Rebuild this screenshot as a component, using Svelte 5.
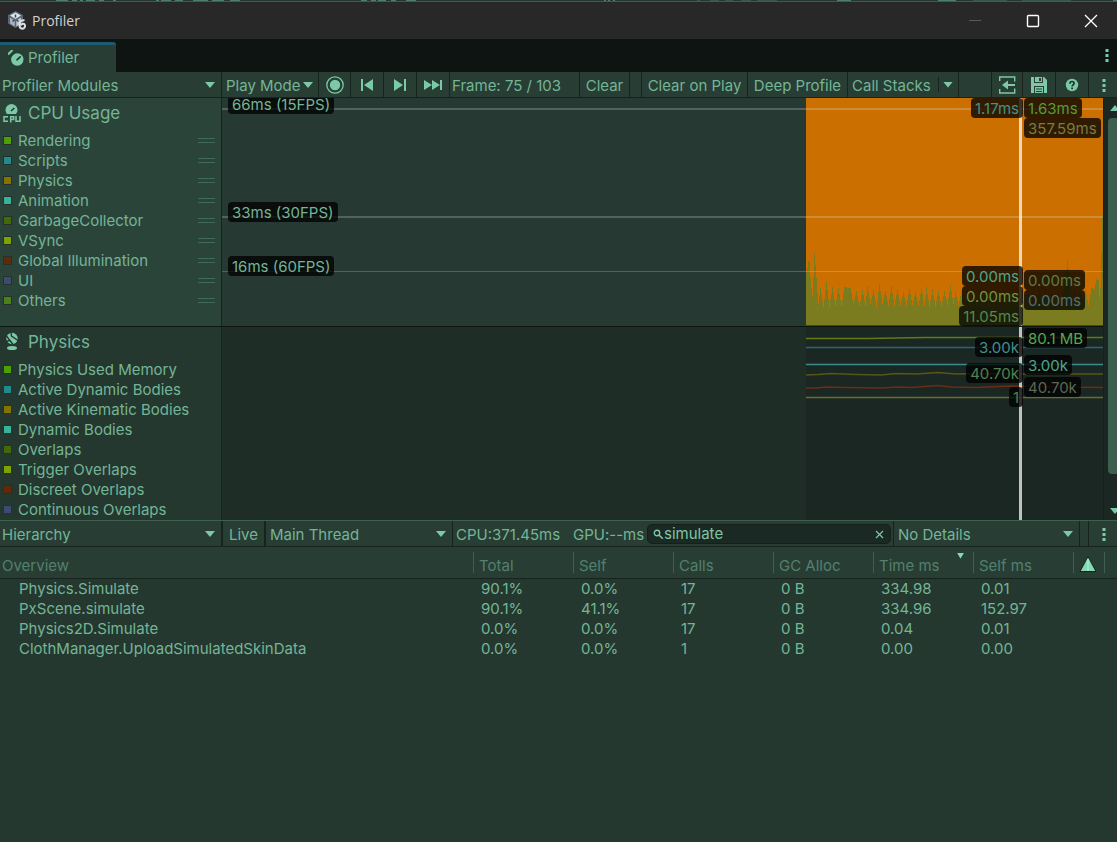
<script>
  const cpuItems = [
    ['Rendering', '#4d9f08'],
    ['Scripts', '#218a8c'],
    ['Physics', '#857300'],
    ['Animation', '#37b39c'],
    ['GarbageCollector', '#43690b'],
    ['VSync', '#7da204'],
    ['Global Illumination', '#5f2a07'],
    ['UI', '#3d4b70'],
    ['Others', '#4b8019'],
  ];
  const physicsItems = [
    ['Physics Used Memory', '#4d9f08'],
    ['Active Dynamic Bodies', '#218a8c'],
    ['Active Kinematic Bodies', '#857300'],
    ['Dynamic Bodies', '#37b39c'],
    ['Overlaps', '#43690b'],
    ['Trigger Overlaps', '#7da204'],
    ['Discreet Overlaps', '#5f2a07'],
    ['Continuous Overlaps', '#3d4b70'],
  ];
  const columns = ['Total', 'Self', 'Calls', 'GC Alloc', 'Time ms', 'Self ms'];
  const rows = [
    ['Physics.Simulate', '90.1%', '0.0%', '17', '0 B', '334.98', '0.01'],
    ['PxScene.simulate', '90.1%', '41.1%', '17', '0 B', '334.96', '152.97'],
    ['Physics2D.Simulate', '0.0%', '0.0%', '17', '0 B', '0.04', '0.01'],
    ['ClothManager.UploadSimulatedSkinData', '0.0%', '0.0%', '1', '0 B', '0.00', '0.00'],
  ];

  // Top edge of the "Others" band: [frame column, y], interpolated into one bar per column.
  const knots = [
    [0, 173], [1, 170], [2, 163], [3, 163], [4, 180], [5, 190], [6, 198], [7, 180], [8, 155], [9, 167], [10, 180], [11, 195],
    [12, 206], [14, 190], [17, 209], [20, 184], [23, 209], [26, 189], [29, 208], [32, 190], [35, 208], [38, 189], [44, 190],
    [47, 206], [50, 193], [53, 208], [56, 192], [59, 208], [61, 188], [64, 206], [67, 192], [70, 209], [73, 186], [76, 206],
    [79, 193], [82, 208], [85, 188], [88, 208], [91, 191], [94, 208], [97, 194], [100, 208], [103, 191], [106, 207],
    [109, 194], [112, 208], [115, 190], [118, 208], [120, 189], [123, 209], [126, 191], [129, 208], [132, 193], [135, 208],
    [138, 193], [141, 207], [144, 187], [147, 206], [149, 194], [152, 208], [155, 193], [158, 208], [161, 192], [164, 208],
    [167, 192], [170, 208], [173, 192], [176, 208], [179, 192], [182, 208], [185, 192], [188, 208], [191, 192], [194, 208],
    [197, 192], [200, 208], [203, 192], [206, 208], [209, 192], [212, 208], [215, 192], [218, 208], [221, 192], [224, 208],
    [227, 192], [230, 208], [233, 192], [236, 208], [239, 190], [242, 208], [245, 192], [248, 208], [251, 192], [254, 208],
    [257, 192], [259, 180], [261, 162], [263, 180], [265, 205], [268, 192], [271, 208], [274, 192], [277, 204], [279, 192],
    [282, 207], [285, 190], [288, 191], [290, 181], [292, 182], [293, 199], [294, 190], [295, 155], [296, 118], [297, 118],
  ];
  let band = 'M0 228';
  let k = 0;
  for (let x = 0; x < 297; x++) {
    while (k < knots.length - 2 && knots[k + 1][0] <= x) k++;
    const [x0, y0] = knots[k];
    const [x1, y1] = knots[k + 1];
    const y = Math.round(y0 + ((y1 - y0) * (x - x0)) / (x1 - x0));
    band += `V${y}H${x + 1}`;
  }
  band += 'V228Z';

  let query = $state('simulate');
</script>

{#snippet dots()}
  <svg class="icon" width="4" height="14" viewBox="0 0 4 14"><path d="M.5 1h3v3h-3zM.5 6h3v3h-3zM.5 11h3v3h-3z" fill="currentColor" /></svg>
{/snippet}

<div class="window">
  <svg class="behind" height="3" width="100%" aria-hidden="true">
    <path d="M56 .5h12M72 .5h5M80 .5h3M86 .5h9M99 .5h5M113 .5h3M156 .5h3M161 .5h10M175 .5h8M193 .5h15M212 .5h12M230 .5h10M361 .5h6M371 .5h5M378 .5h8M391 .5h5M406 .5h10M604 .5h2M608 .5h2M613 .5h2M837 .5h14M938 .5h18M1113 .5h4" stroke="#4a7f6a" />
    <path d="M697 .5h3M710 .5h9M725 .5h8M741 .5h10M757 .5h20M973 .5h34M1022 .5h49" stroke="#35574a" />
    <path d="M0 1.500H1117" stroke="#45594f" />
    <path d="M0 2.500H1117" stroke="#282828" />
  </svg>
  <header class="titlebar">
    <svg width="20" height="20" viewBox="0 0 20 20">
      <path d="M8.500 0 16 4v8.500L8.500 17 1 12.500V4z" fill="#596775" />
      <path d="M8.500 1.500 14 4.500 8.500 8 3 4.500z" fill="#e1e7eb" />
      <path d="M3 6.500 7.700 9.400v6L3 12.500z" fill="#aab4c0" />
      <path d="M9.300 9.400 14 6.500v6l-4.700 3z" fill="#c2cad1" />
      <path d="M8.500 3.500v3M5.500 10.500l2-1.500M11.500 10.500l-2-1.500" stroke="#354350" stroke-width="1.500" />
      <path d="M17.500 9.500c-3-1-5 1-5 4.500 0 5 5.500 4.500 5.500 1 0-3-3.500-3-4-.5" fill="none" stroke="#dce1e5" stroke-width="2" />
    </svg>
    <h1>Profiler</h1>
    <div class="wincontrols">
      <button aria-label="Minimize" disabled><svg width="14" height="14" viewBox="0 0 14 14"><path d="M1 6.500h12" stroke="#595959" /></svg></button>
      <button aria-label="Maximize"><svg width="14" height="14" viewBox="0 0 14 14"><rect x="1.500" y="1.500" width="11" height="11" rx="1" fill="none" stroke="#fff" stroke-width="1.400" /></svg></button>
      <button aria-label="Close"><svg width="14" height="14" viewBox="0 0 14 14"><path d="M1 1l12 12M13 1 1 13" stroke="#fff" stroke-width="1.300" /></svg></button>
    </div>
  </header>

  <nav class="tabs">
    <button class="tab">
      <svg width="16" height="16" viewBox="0 0 16 16">
        <circle cx="9.300" cy="9.500" r="6.200" fill="currentColor" />
        <path d="M9 9.800 12.200 6.800" stroke="#1d2f28" stroke-width="1.600" stroke-linecap="round" />
        <path d="M0 4.500 4.500 0" stroke="currentColor" stroke-width="2" />
        <path d="M1.500 7.500 7 2" stroke="#283d34" stroke-width="1.600" />
      </svg>
      <span>Profiler</span>
    </button>
    <button class="more" aria-label="Window options">{@render dots()}</button>
  </nav>

  <div class="toolbar">
    <div class="select side">
      <select aria-label="Profiler modules"><option>Profiler Modules</option></select>
    </div>
    <div class="select play">
      <select aria-label="Target"><option>Play Mode</option></select>
    </div>
    <button class="sq" aria-label="Record">
      <svg width="18" height="18" viewBox="0 0 18 18"><circle cx="9" cy="9" r="8.200" fill="none" stroke="currentColor" stroke-width="1.300" /><circle cx="9" cy="9" r="5.200" fill="currentColor" /></svg>
    </button>
    <button class="sq" aria-label="Previous frame">
      <svg width="14" height="14" viewBox="0 0 14 14"><path d="M1 1h2v12H1zM13 1v12L4 7z" fill="currentColor" /></svg>
    </button>
    <button class="sq" aria-label="Next frame">
      <svg width="14" height="14" viewBox="0 0 14 14"><path d="M11 1h2v12h-2zM1 1v12l9-6z" fill="currentColor" /></svg>
    </button>
    <button class="sq" aria-label="Current frame">
      <svg width="18" height="14" viewBox="0 0 18 14"><path d="M0 2v10l8-5zM8 2v10l8-5zM16 2h2v10h-2z" fill="currentColor" /></svg>
    </button>
    <span class="frame">Frame: 75 / 103</span>
    <button class="text clear">Clear</button>
    <span class="spacer"></span>
    <button class="text onplay">Clear on Play</button>
    <button class="text deep">Deep Profile</button>
    <button class="text stacks">Call Stacks</button>
    <button class="drop" aria-label="Call stack options"><i class="caret"></i></button>
    <span class="fill"></span>
    <button class="sq" aria-label="Load profile">
      <svg width="18" height="18" viewBox="0 0 18 18"><path d="M1.700 5V1h15v4.500M16.700 12.500V17h-15v-4" fill="none" stroke="currentColor" stroke-width="1.400" /><path d="M7 9h10" stroke="currentColor" stroke-width="2" /><path d="M4 9l6-4.500v9z" fill="currentColor" /></svg>
    </button>
    <button class="sq" aria-label="Save profile">
      <svg width="16" height="16" viewBox="0 0 16 16"><path d="M0 0h3v6h9V0h1l3 3v13h-3V9H3v7H0z" fill="currentColor" /><path d="M4 0h7v5H4zM4 10h8v6H4z" fill="currentColor" /><path d="M8 1h2v3H8zM5 11.500h6v1H5zM5 14h6v1H5z" fill="#283d34" /></svg>
    </button>
    <button class="sq" aria-label="Help">
      <svg width="14" height="14" viewBox="0 0 14 14"><circle cx="7" cy="7" r="6.200" fill="currentColor" /><path d="M4.900 5.700C4.900 2.700 9.200 2.900 9.100 5.400 9 6.800 7.100 6.900 7.100 8.500M7.100 9.600v1.600" fill="none" stroke="#20332b" stroke-width="1.700" /></svg>
    </button>
    <button class="menu" aria-label="Profiler options">{@render dots()}</button>
  </div>

  <main class="modules">
    <div class="list">
      <section class="module selected">
        <div class="row">
          <div class="side">
            <h2>
              <svg width="20" height="20" viewBox="0 0 20 20">
                <path d="M5.500 11a6 6 0 1 1 9 0z" transform="translate(-.5 0)" fill="currentColor" />
                <path d="M9 8 12.300 5" stroke="#213a30" stroke-width="1.600" />
                <path d="M6 13.700H2v4.600h4M8.700 19.500v-5.800h3v2.900h-3M14 13v5.300h4V13" fill="none" stroke="currentColor" stroke-width="1.500" />
              </svg>
              CPU Usage
            </h2>
            <ul>
              {#each cpuItems as [name, color]}
                <li><i class="swatch" style="background:{color}"></i><span>{name}</span><i class="grip"></i></li>
              {/each}
            </ul>
          </div>
          <div class="plot">
            <svg class="data" viewBox="0 0 297 228" preserveAspectRatio="none" shape-rendering="crispEdges">
              <rect width="297" height="228" fill="#cb7000" />
              <path d={band} fill="#7b7c20" />
              <path d="M0 227.500H297" stroke="#3d4a22" />
            </svg>
            <i class="grid thick" style="top:10px"></i>
            <i class="grid thick" style="top:118px"></i>
            <i class="grid" style="top:173px"></i>
            <i class="cursor"></i>
            <span class="tag scale" style="top:-4px">66ms (15FPS)</span>
            <span class="tag scale" style="top:104px">33ms (30FPS)</span>
            <span class="tag scale" style="top:158px">16ms (60FPS)</span>
            <span class="tag l" style="top:0px;color:#449384">1.17ms</span>
            <span class="tag r" style="top:0px;color:#569a3a">1.63ms</span>
            <span class="tag r" style="top:20px;color:#787d43">357.59ms</span>
            <span class="tag l" style="top:168px;color:#51a58c">0.00ms</span>
            <span class="tag l" style="top:188px;color:#6f9545">0.00ms</span>
            <span class="tag l" style="top:208px;color:#548a4d">11.05ms</span>
            <span class="tag r" style="top:172px;color:#5a7c49">0.00ms</span>
            <span class="tag r" style="top:192px;color:#566f70">0.00ms</span>
          </div>
        </div>
      </section>
      <section class="module">
        <div class="row">
          <div class="side">
            <h2>
              <svg width="20" height="20" viewBox="0 0 20 20">
                <circle cx="10" cy="6.500" r="5.700" fill="currentColor" />
                <path d="M4 3.500 8 8.500 11 12.500M9 0l.5 4L16 8.500M4 9.500l3.500-1" fill="none" stroke="#24382f" stroke-width="1.400" />
                <ellipse cx="10" cy="16" rx="5" ry="2" fill="currentColor" />
              </svg>
              Physics
            </h2>
            <ul>
              {#each physicsItems as [name, color]}
                <li><i class="swatch" style="background:{color}"></i><span>{name}</span></li>
              {/each}
            </ul>
          </div>
          <div class="plot">
            <svg class="data" viewBox="0 0 297 193" preserveAspectRatio="none">
              <rect width="297" height="193" fill="#1b2723" />
              <g fill="none" stroke-width="1.500">
                <path d="M0 11.500H60L120 10.500H220L297 10.500" stroke="#5f7b12" />
                <path d="M0 20.500H297" stroke="#2c6475" />
                <path d="M0 37.500H297" stroke="#3d8a8c" />
                <path d="M0 48 12 47.500 25 46.500 50 47.500 75 48 90 46.500 110 47 132 45.500 150 47 175 46.500 215 47 240 46.500 265 47H297" stroke="#56561a" />
                <path d="M0 61H10L20 60 40 60.500 75 61 92 60 105 60.500 132 58.500 145 60 170 60.500 205 59 250 60 297 60.500" stroke="#6b2c18" />
                <path d="M0 70.500H297" stroke="#66702a" />
              </g>
            </svg>
            <i class="cursor"></i>
            <span class="tag r" style="top:1px;color:#5ba552">80.1 MB</span>
            <span class="tag l" style="top:10px;color:#448f89">3.00k</span>
            <span class="tag r" style="top:28px;color:#51a48c">3.00k</span>
            <span class="tag l" style="top:36px;color:#4f8250">40.70k</span>
            <span class="tag r" style="top:50px;color:#576954">40.70k</span>
            <span class="tag l" style="top:60px;color:#4f8250">1</span>
          </div>
        </div>
      </section>
    </div>
    <div class="scroll">
      <i class="caret up"></i>
      <i class="thumb"></i>
      <i class="caret"></i>
    </div>
  </main>

  <div class="toolbar lower">
    <div class="select side">
      <select aria-label="View"><option>Hierarchy</option></select>
    </div>
    <button class="text live">Live</button>
    <div class="select thread">
      <select aria-label="Thread"><option>Main Thread</option></select>
    </div>
    <span class="stat">CPU:371.45ms</span>
    <span class="stat gpu">GPU:--ms</span>
    <label class="search">
      <svg width="11" height="11" viewBox="0 0 11 11"><circle cx="4" cy="4" r="2.700" fill="none" stroke="currentColor" stroke-width="1.400" /><path d="M6 6l3.800 3.800" stroke="currentColor" stroke-width="1.600" /></svg>
      <input type="text" aria-label="Search samples" bind:value={query} />
      <button aria-label="Clear search" onclick={() => (query = '')}><svg width="9" height="9" viewBox="0 0 9 9"><path d="M1 1l7 7M8 1 1 8" stroke="currentColor" stroke-width="1.200" /></svg></button>
    </label>
    <div class="select details">
      <select aria-label="Details"><option>No Details</option></select>
    </div>
    <span class="notch"></span>
    <button class="menu" aria-label="Hierarchy options">{@render dots()}</button>
  </div>

  <table>
    <colgroup>
      <col />
      {#each columns as _}<col class="num" />{/each}
      <col class="warn" />
      <col class="rest" />
    </colgroup>
    <thead>
      <tr>
        <th class="first">Overview</th>
        {#each columns as c}
          <th><span class="head">{c}{#if c === 'Time ms'}<i class="sort"></i>{/if}</span></th>
        {/each}
        <th><span class="head mark">
          <svg width="18" height="18" viewBox="0 0 18 18"><path d="M9 1.500 17 16.500H1z" fill="#84d8b4" stroke="#16241e" stroke-width="1" /><path d="M9 4v12" stroke="#a0f0cc" stroke-width="1.500" /></svg>
        </span></th>
        <th><span class="head"></span></th>
      </tr>
    </thead>
    <tbody>
      {#each rows as row}
        <tr>
          {#each row as cell}<td>{cell}</td>{/each}
          <td></td><td></td>
        </tr>
      {/each}
    </tbody>
  </table>
</div>

<style>
  :global(body) { background: #24382f; }
  .window {
    min-height: 100vh;
    display: flex;
    flex-direction: column;
    background: #24382f;
    color: #74b597;
    font: 15px/20px Inter, sans-serif;
    overflow: hidden;
  }
  .window * { box-sizing: border-box; }
  svg { display: block; flex: none; }
  i { display: block; flex: none; }
  button {
    border: 0; padding: 0; margin: 0;
    background: none; color: inherit; font: inherit;
    display: flex; align-items: center; justify-content: center;
    white-space: nowrap;
  }
  .toolbar svg, .tabs svg, h2 svg { color: #7cc9a8; }

  .behind { background: #22372f; }
  .titlebar {
    height: 36px;
    display: flex;
    align-items: center;
    background: #282828;
    padding-left: 7px;
    gap: 5px;
  }
  h1 { margin: 0; font: 400 14px/20px "Open Sans", sans-serif; color: #d2d2d2; }
  .wincontrols { margin-left: auto; display: flex; }
  .wincontrols button { width: 58px; height: 34px; }
  .wincontrols button:last-child { width: 55px; padding-left: 3px; }

  .tabs {
    height: 33px;
    background: #0e1412;
    display: flex;
    align-items: flex-end;
    justify-content: space-between;
  }
  .tab {
    width: 116px; height: 30px;
    border-top: 3px solid #1d5a71;
    border-top-right-radius: 3px;
    background: #283d34;
    justify-content: flex-start;
    padding: 0 0 2px 8px;
    gap: 4px;
  }
  .more { width: 20px; height: 33px; padding-bottom: 2px; }

  .toolbar {
    height: 26px;
    display: flex;
    background: #283d34;
    border-bottom: 1px solid #17241e;
  }
  .toolbar > * { border-right: 1px solid #17241e; flex: none; }
  .side { width: 222px; flex: none; border-right: 1px solid #17241e; }
  .select { position: relative; }
  .select select {
    appearance: none;
    width: 100%; height: 100%;
    border: 0; margin: 0;
    padding: 2px 16px 0 2px;
    background: none; color: inherit; font: inherit;
  }
  .select::after, .caret {
    content: "";
    width: 10px; height: 6px;
    background: #7cc9a8;
    clip-path: polygon(0 0, 100% 0, 50% 100%);
  }
  .select::after { position: absolute; right: 6px; top: 10px; pointer-events: none; }
  .play { width: 97px; }
  .select.play::after { right: 5px; }
  .play select, .details select, .thread select { padding: 2px 10px 0 4px; }
  .text { padding-top: 2px; }
  .sq { width: 33px; }
  .play + .sq { width: 32px; }
  .frame { width: 130px; padding: 4px 0 0 2px; }
  .clear { width: 50px; }
  .spacer { width: 12px; }
  .onplay { width: 106px; }
  .deep { width: 100px; }
  .toolbar > .stacks { width: 90px; border-right: 0; justify-content: flex-start; padding-left: 4px; }
  .toolbar > .drop {
    width: 21px;
    background: linear-gradient(#17241e, #17241e) left center / 1px 15px no-repeat;
  }
  .fill { flex: 1 1 0; }
  .fill + .sq { width: 31px; }
  .toolbar > .menu { width: 28px; border-right: 0; padding-left: 2px; }

  .modules { display: flex; background: #19251f; }
  .list { flex: 1; min-width: 0; }
  .row { display: flex; }
  .module.selected { border-bottom: 1px solid #0d1512; }
  .module .side { background: #24382f; padding-bottom: 1px; }
  .module.selected .side { background: #2b443a; padding-bottom: 16px; }
  h2 {
    margin: 0 0 2px;
    display: flex; align-items: center; gap: 6px;
    height: 30px;
    padding-left: 2px;
    font-size: 17px; font-weight: 400;
  }
  ul { list-style: none; margin: 0; padding: 0; }
  li { display: flex; align-items: center; height: 20px; padding: 0 6px 0 3px; gap: 6px; white-space: nowrap; }
  li span { padding-top: 2px; }
  .swatch { width: 9px; height: 9px; border: 1px solid #263127; }
  .grip { width: 17px; height: 5px; margin-left: auto; border: solid #416b58; border-width: 1px 0; }
  .plot { flex: 1; min-width: 0; position: relative; overflow: hidden; background: #1f2d27; }
  .selected .plot { background: #263a33; }
  .data { position: absolute; right: 0; top: 0; height: 100%; width: 297px; }
  .grid { position: absolute; left: 0; right: 0; height: 1px; background: rgba(215, 225, 220, .25); }
  .thick { height: 2px; }
  .cursor { position: absolute; right: 81px; top: 0; bottom: 0; width: 3px; background: rgba(255, 255, 255, .72); }
  .tag {
    position: absolute;
    height: 20px;
    padding: 1px 4px 0;
    border-radius: 4px;
    background: rgba(0, 0, 0, .76);
    white-space: nowrap;
  }
  .scale { left: 6px; }
  .l { right: 80px; }
  .r { left: calc(100% - 79px); }

  .scroll {
    width: 14px;
    padding: 7px 0 6px 4px;
    display: flex; flex-direction: column;
    border-left: 1px solid #16211c;
    background: #1a2722;
    overflow: hidden;
  }
  .scroll .caret { margin-left: 2px; }
  .scroll .up { clip-path: polygon(50% 0, 100% 100%, 0 100%); }
  .thumb { flex: 0 0 356px; margin: 7px 0 auto; background: #3c5f4f; border-radius: 4px 0 0 4px; }

  .lower { height: 27px; border-top: 1px solid #40604f; }
  .lower > .side { border-right-width: 2px; width: 223px; }
  .lower > .live { width: 43px; border-right-width: 2px; }
  .thread { width: 187px; }
  .lower > .stat { border: 0; padding: 4px 0 0 3px; width: 116px; }
  .lower > .gpu { width: 78px; padding-left: 4px; }
  .lower > .search {
    flex: 1; min-width: 0;
    margin: 3px 2px 2px 0;
    display: flex; align-items: center;
    padding: 0 6px 0 5px;
    background: #1a2923;
    border: 1px solid #15201b;
    border-radius: 5px;
  }
  .search input {
    flex: 1; min-width: 0;
    border: 0; padding: 0; margin: 0; outline: 0;
    background: none; color: #7fc6a7; font: inherit;
  }
  .lower > .details { width: 187px; border-left: 1px solid #17241e; }
  .lower > .notch { width: 9px; }

  table { width: 100%; border-collapse: collapse; table-layout: fixed; }
  .num { width: 100px; }
  .warn { width: 31px; }
  .rest { width: 13px; }
  thead { background: #283d34; }
  thead tr { height: 31px; border-bottom: 1px solid #17241e; }
  th { padding: 0; text-align: left; font-weight: 400; color: #54806e; }
  .first { padding: 8px 0 0 2px; }
  .head {
    position: relative;
    display: block; height: 21px;
    border-left: 1px solid #3f6051;
    padding: 4px 0 0 5px;
  }
  .mark { padding-top: 3px; }
  .sort {
    position: absolute; right: 9px; top: 1px;
    width: 7px; height: 6px;
    background: #84d8b4;
    clip-path: polygon(0 0, 100% 0, 50% 100%);
  }
  td { height: 20px; padding: 0 0 0 8px; white-space: nowrap; }
  td:first-child { padding-left: 19px; }
</style>
